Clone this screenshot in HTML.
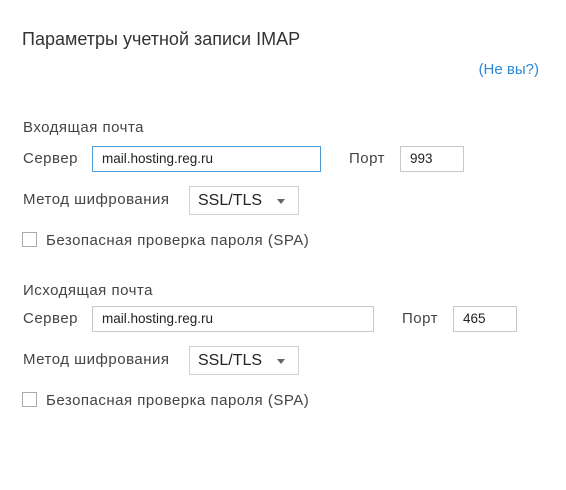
<!DOCTYPE html>
<html><head><meta charset="utf-8"><style>
body{margin:0;width:566px;height:490px;background:#fff;position:relative;font-family:"Liberation Sans",sans-serif;color:#444;overflow:hidden}
.a{position:absolute;white-space:nowrap}
.t{font-size:18px;color:#333}
.l{font-size:15px;letter-spacing:0.5px}
.box{position:absolute;border:1px solid #c8c8c8;box-sizing:border-box;font-size:13.5px;color:#222;padding-left:9px;line-height:24px}
.dd{position:absolute;border:1px solid #d0d0d0;box-sizing:border-box;font-size:16px;color:#222;padding-left:8px;line-height:28px}
.dd:after{content:"";position:absolute;right:13px;top:12px;border-left:4px solid transparent;border-right:4px solid transparent;border-top:5px solid #666}
.cb{position:absolute;width:15px;height:15px;border:1px solid #aaa;box-sizing:border-box}
</style></head><body>
<div class="a t" style="left:22px;top:29px">Параметры учетной записи IMAP</div>
<div class="a" style="right:27px;top:61px;font-size:15px;color:#2b88d8">(Не вы?)</div>

<div class="a l" style="left:23px;top:119px">Входящая почта</div>
<div class="a l" style="left:23px;top:150px">Сервер</div>
<div class="box" style="left:92px;top:146px;width:229px;height:26px;border-color:#4a9ad8">mail.hosting.reg.ru</div>
<div class="a l" style="left:349px;top:150px">Порт</div>
<div class="box" style="left:400px;top:146px;width:64px;height:26px">993</div>
<div class="a l" style="left:23px;top:191px">Метод шифрования</div>
<div class="dd" style="left:189px;top:186px;width:110px;height:29px">SSL/TLS&nbsp;</div>
<div class="cb" style="left:22px;top:232px"></div>
<div class="a l" style="left:46px;top:232px">Безопасная проверка пароля (SPA)</div>

<div class="a l" style="left:23px;top:282px">Исходящая почта</div>
<div class="a l" style="left:23px;top:310px">Сервер</div>
<div class="box" style="left:92px;top:306px;width:282px;height:26px">mail.hosting.reg.ru</div>
<div class="a l" style="left:402px;top:310px">Порт</div>
<div class="box" style="left:453px;top:306px;width:64px;height:26px">465</div>
<div class="a l" style="left:23px;top:351px">Метод шифрования</div>
<div class="dd" style="left:189px;top:346px;width:110px;height:29px">SSL/TLS</div>
<div class="cb" style="left:22px;top:392px"></div>
<div class="a l" style="left:46px;top:392px">Безопасная проверка пароля (SPA)</div>
</body></html>
